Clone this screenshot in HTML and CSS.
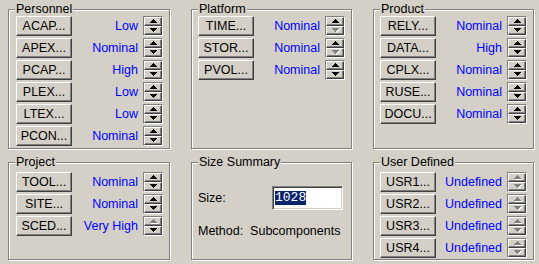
FILE: index.html
```html
<!DOCTYPE html>
<html>
<head>
<meta charset="utf-8">
<link rel="stylesheet" href="styles.css">
</head>
<body>
<svg width="0" height="0" class="defs">
  <defs>
    <path id="up" d="M3 0h1v1h1v1h1v1h1v1H0V3h1V2h1V1h1z"/>
    <path id="down" d="M0 0h7v1h-1v1h-1v1h-1v1H3V3H2V2H1V1H0z"/>
  </defs>
</svg>
<div class="dialog">
  <div class="group g-top c1">
    <span class="legend">Personnel</span>
    <div class="row"><button class="btn">ACAP...</button><span class="val">Low</span><span class="spin"><span class="sb"><svg width="8" height="5" viewBox="0 0 8 5"><use href="#up"/></svg></span><span class="sb"><svg width="8" height="5" viewBox="0 0 8 5"><use href="#down"/></svg></span></span></div>
    <div class="row"><button class="btn">APEX...</button><span class="val">Nominal</span><span class="spin"><span class="sb"><svg width="8" height="5" viewBox="0 0 8 5"><use href="#up"/></svg></span><span class="sb"><svg width="8" height="5" viewBox="0 0 8 5"><use href="#down"/></svg></span></span></div>
    <div class="row"><button class="btn">PCAP...</button><span class="val">High</span><span class="spin"><span class="sb"><svg width="8" height="5" viewBox="0 0 8 5"><use href="#up"/></svg></span><span class="sb"><svg width="8" height="5" viewBox="0 0 8 5"><use href="#down"/></svg></span></span></div>
    <div class="row"><button class="btn">PLEX...</button><span class="val">Low</span><span class="spin"><span class="sb"><svg width="8" height="5" viewBox="0 0 8 5"><use href="#up"/></svg></span><span class="sb"><svg width="8" height="5" viewBox="0 0 8 5"><use href="#down"/></svg></span></span></div>
    <div class="row"><button class="btn">LTEX...</button><span class="val">Low</span><span class="spin"><span class="sb"><svg width="8" height="5" viewBox="0 0 8 5"><use href="#up"/></svg></span><span class="sb"><svg width="8" height="5" viewBox="0 0 8 5"><use href="#down"/></svg></span></span></div>
    <div class="row"><button class="btn">PCON...</button><span class="val">Nominal</span><span class="spin"><span class="sb"><svg width="8" height="5" viewBox="0 0 8 5"><use href="#up"/></svg></span><span class="sb"><svg width="8" height="5" viewBox="0 0 8 5"><use href="#down"/></svg></span></span></div>
  </div>
  <div class="group g-top c2">
    <span class="legend">Platform</span>
    <div class="row"><button class="btn">TIME...</button><span class="val">Nominal</span><span class="spin"><span class="sb"><svg width="8" height="5" viewBox="0 0 8 5"><use href="#up"/></svg></span><span class="sb dis"><svg width="8" height="5" viewBox="0 0 8 5"><use href="#down" class="hl" x="1" y="1"/><use href="#down"/></svg></span></span></div>
    <div class="row"><button class="btn">STOR...</button><span class="val">Nominal</span><span class="spin"><span class="sb"><svg width="8" height="5" viewBox="0 0 8 5"><use href="#up"/></svg></span><span class="sb dis"><svg width="8" height="5" viewBox="0 0 8 5"><use href="#down" class="hl" x="1" y="1"/><use href="#down"/></svg></span></span></div>
    <div class="row"><button class="btn">PVOL...</button><span class="val">Nominal</span><span class="spin"><span class="sb"><svg width="8" height="5" viewBox="0 0 8 5"><use href="#up"/></svg></span><span class="sb"><svg width="8" height="5" viewBox="0 0 8 5"><use href="#down"/></svg></span></span></div>
  </div>
  <div class="group g-top c3">
    <span class="legend">Product</span>
    <div class="row"><button class="btn">RELY...</button><span class="val">Nominal</span><span class="spin"><span class="sb"><svg width="8" height="5" viewBox="0 0 8 5"><use href="#up"/></svg></span><span class="sb"><svg width="8" height="5" viewBox="0 0 8 5"><use href="#down"/></svg></span></span></div>
    <div class="row"><button class="btn">DATA...</button><span class="val">High</span><span class="spin"><span class="sb"><svg width="8" height="5" viewBox="0 0 8 5"><use href="#up"/></svg></span><span class="sb"><svg width="8" height="5" viewBox="0 0 8 5"><use href="#down"/></svg></span></span></div>
    <div class="row"><button class="btn">CPLX...</button><span class="val">Nominal</span><span class="spin"><span class="sb"><svg width="8" height="5" viewBox="0 0 8 5"><use href="#up"/></svg></span><span class="sb"><svg width="8" height="5" viewBox="0 0 8 5"><use href="#down"/></svg></span></span></div>
    <div class="row"><button class="btn">RUSE...</button><span class="val">Nominal</span><span class="spin"><span class="sb"><svg width="8" height="5" viewBox="0 0 8 5"><use href="#up"/></svg></span><span class="sb"><svg width="8" height="5" viewBox="0 0 8 5"><use href="#down"/></svg></span></span></div>
    <div class="row"><button class="btn">DOCU...</button><span class="val">Nominal</span><span class="spin"><span class="sb"><svg width="8" height="5" viewBox="0 0 8 5"><use href="#up"/></svg></span><span class="sb"><svg width="8" height="5" viewBox="0 0 8 5"><use href="#down"/></svg></span></span></div>
  </div>

  <div class="group g-bot c1">
    <span class="legend">Project</span>
    <div class="row"><button class="btn">TOOL...</button><span class="val">Nominal</span><span class="spin"><span class="sb"><svg width="8" height="5" viewBox="0 0 8 5"><use href="#up"/></svg></span><span class="sb"><svg width="8" height="5" viewBox="0 0 8 5"><use href="#down"/></svg></span></span></div>
    <div class="row"><button class="btn">SITE...</button><span class="val">Nominal</span><span class="spin"><span class="sb"><svg width="8" height="5" viewBox="0 0 8 5"><use href="#up"/></svg></span><span class="sb"><svg width="8" height="5" viewBox="0 0 8 5"><use href="#down"/></svg></span></span></div>
    <div class="row"><button class="btn">SCED...</button><span class="val">Very High</span><span class="spin"><span class="sb dis"><svg width="8" height="5" viewBox="0 0 8 5"><use href="#up" class="hl" x="1" y="1"/><use href="#up"/></svg></span><span class="sb"><svg width="8" height="5" viewBox="0 0 8 5"><use href="#down"/></svg></span></span></div>
  </div>
  <div class="group g-bot c2 size">
    <span class="legend">Size Summary</span>
    <div class="size-row"><span>Size:</span><span class="field"><span class="sel">1028</span></span></div>
    <div class="method">Method:&nbsp; Subcomponents</div>
  </div>
  <div class="group g-bot c3">
    <span class="legend">User Defined</span>
    <div class="row"><button class="btn">USR1...</button><span class="val">Undefined</span><span class="spin"><span class="sb dis"><svg width="8" height="5" viewBox="0 0 8 5"><use href="#up" class="hl" x="1" y="1"/><use href="#up"/></svg></span><span class="sb dis"><svg width="8" height="5" viewBox="0 0 8 5"><use href="#down" class="hl" x="1" y="1"/><use href="#down"/></svg></span></span></div>
    <div class="row"><button class="btn">USR2...</button><span class="val">Undefined</span><span class="spin"><span class="sb dis"><svg width="8" height="5" viewBox="0 0 8 5"><use href="#up" class="hl" x="1" y="1"/><use href="#up"/></svg></span><span class="sb dis"><svg width="8" height="5" viewBox="0 0 8 5"><use href="#down" class="hl" x="1" y="1"/><use href="#down"/></svg></span></span></div>
    <div class="row"><button class="btn">USR3...</button><span class="val">Undefined</span><span class="spin"><span class="sb dis"><svg width="8" height="5" viewBox="0 0 8 5"><use href="#up" class="hl" x="1" y="1"/><use href="#up"/></svg></span><span class="sb dis"><svg width="8" height="5" viewBox="0 0 8 5"><use href="#down" class="hl" x="1" y="1"/><use href="#down"/></svg></span></span></div>
    <div class="row"><button class="btn">USR4...</button><span class="val">Undefined</span><span class="spin"><span class="sb dis"><svg width="8" height="5" viewBox="0 0 8 5"><use href="#up" class="hl" x="1" y="1"/><use href="#up"/></svg></span><span class="sb dis"><svg width="8" height="5" viewBox="0 0 8 5"><use href="#down" class="hl" x="1" y="1"/><use href="#down"/></svg></span></span></div>
  </div>
</div>
</body>
</html>
```
FILE: styles.css
```css
html, body {
  margin: 0;
  padding: 0;
  background: #d4d0c8;
  width: 539px;
  height: 264px;
  overflow: hidden;
}
body {
  font-family: "Liberation Sans", Arial, sans-serif;
  font-size: 12.5px;
  line-height: 14px;
  color: #000;
}
.defs {
  position: absolute;
}
.dialog {
  display: grid;
  grid-template-columns: 162px 161px 161px;
  grid-template-rows: 140px 98px;
  column-gap: 21px;
  row-gap: 13px;
  padding: 9px 0 0 8px;
}
.group {
  position: relative;
  border: 1px solid #808080;
  box-shadow: 1px 1px 0 #fff, inset 1px 1px 0 #fff;
  padding: 6px 6px 0 6px;
}
.group.c1 {
  padding-left: 7px;
}
.g-bot {
  padding-top: 9px;
}
.legend {
  position: absolute;
  top: -8px;
  left: 6px;
  padding: 0 1px;
  background: #d4d0c8;
  line-height: 14px;
  white-space: nowrap;
}
.row {
  display: flex;
  align-items: center;
  height: 20px;
  margin-bottom: 2px;
}
.btn {
  width: 56px;
  height: 20px;
  box-sizing: border-box;
  padding: 0;
  margin: 0;
  font: inherit;
  line-height: 14px;
  color: #000;
  background: #d4d0c8;
  border: 1px solid;
  border-color: #fff #404040 #404040 #fff;
  box-shadow: inset -1px -1px 0 #808080;
  text-align: center;
}
.val {
  flex: 1;
  text-align: right;
  color: #0000ff;
  margin-right: 5px;
  white-space: nowrap;
}
.spin {
  width: 20px;
  height: 20px;
  box-sizing: border-box;
  border: 1px solid;
  border-color: #808080 #fff #fff #808080;
  display: flex;
  flex-direction: column;
}
.sb {
  flex: 1;
  box-sizing: border-box;
  border: 1px solid;
  border-color: #fff #404040 #404040 #fff;
  box-shadow: inset -1px -1px 0 #808080;
  display: flex;
  align-items: center;
  justify-content: center;
  padding-left: 1px;
}
.sb svg {
  display: block;
  fill: #000;
  shape-rendering: crispEdges;
}
.sb.dis svg {
  fill: #808080;
}
.sb.dis svg .hl {
  fill: #fff;
}
.size {
  padding: 23px 8px 0 6px;
}
.size-row {
  display: flex;
  align-items: center;
  justify-content: space-between;
}
.field {
  width: 71px;
  height: 24px;
  box-sizing: border-box;
  border: 1px solid;
  border-color: #808080 #fff #fff #808080;
  box-shadow: inset 1px 1px 0 #404040, inset -1px -1px 0 #d4d0c8;
  background: #fff;
  display: flex;
  align-items: center;
  padding-left: 2px;
}
.sel {
  background: #0a246a;
  color: #fff;
  font-family: "Liberation Mono", "DejaVu Sans Mono", monospace;
  font-size: 13px;
  line-height: 14px;
}
.method {
  margin-top: 14px;
  white-space: nowrap;
}
```
